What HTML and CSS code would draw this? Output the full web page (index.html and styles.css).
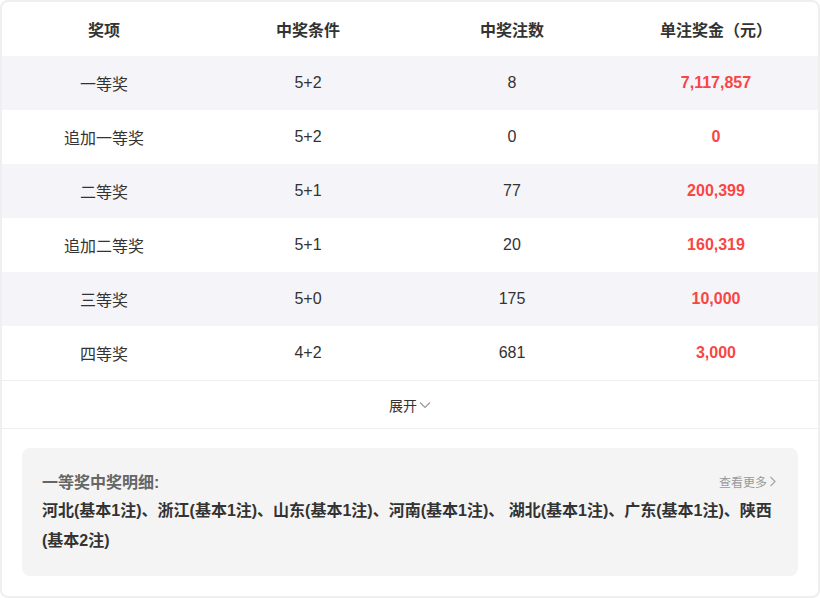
FILE: index.html
```html
<!DOCTYPE html>
<html lang="zh">
<head>
<meta charset="utf-8">
<link rel="stylesheet" href="styles.css">
</head>
<body>
<div class="card">
  <div class="row head">
    <div class="cell">奖项</div>
    <div class="cell">中奖条件</div>
    <div class="cell">中奖注数</div>
    <div class="cell">单注奖金（元）</div>
  </div>
  <div class="row alt">
    <div class="cell">一等奖</div>
    <div class="cell">5+2</div>
    <div class="cell">8</div>
    <div class="cell money">7,117,857</div>
  </div>
  <div class="row">
    <div class="cell">追加一等奖</div>
    <div class="cell">5+2</div>
    <div class="cell">0</div>
    <div class="cell money">0</div>
  </div>
  <div class="row alt">
    <div class="cell">二等奖</div>
    <div class="cell">5+1</div>
    <div class="cell">77</div>
    <div class="cell money">200,399</div>
  </div>
  <div class="row">
    <div class="cell">追加二等奖</div>
    <div class="cell">5+1</div>
    <div class="cell">20</div>
    <div class="cell money">160,319</div>
  </div>
  <div class="row alt">
    <div class="cell">三等奖</div>
    <div class="cell">5+0</div>
    <div class="cell">175</div>
    <div class="cell money">10,000</div>
  </div>
  <div class="row">
    <div class="cell">四等奖</div>
    <div class="cell">4+2</div>
    <div class="cell">681</div>
    <div class="cell money">3,000</div>
  </div>
  <div class="expand">展开<svg class="chev-down" width="12" height="8" viewBox="0 0 12 8"><path d="M1 1.5 L6 6.5 L11 1.5" fill="none" stroke="#999" stroke-width="1.2"/></svg></div>
  <div class="detail-wrap">
    <div class="detail">
      <div class="detail-top">
        <span class="detail-title">一等奖中奖明细:</span>
        <span class="more">查看更多<svg width="7" height="11" viewBox="0 0 7 11"><path d="M1.5 1 L6 5.5 L1.5 10" fill="none" stroke="#aaa" stroke-width="1.3"/></svg></span>
      </div>
      <div class="detail-text">河北(基本1注)、浙江(基本1注)、山东(基本1注)、河南(基本1注)、 湖北(基本1注)、广东(基本1注)、陕西(基本2注)</div>
    </div>
  </div>
</div>
</body>
</html>
```
FILE: styles.css
```css
* { box-sizing: border-box; }
html, body { margin: 0; padding: 0; background: #fff; }
body {
  font-family: "Liberation Sans", "Noto Sans CJK SC", sans-serif;
  color: #333;
  width: 820px;
  height: 598px;
}
.card {
  width: 820px;
  height: 598px;
  border: 2px solid #efefef;
  border-radius: 8px;
  overflow: hidden;
  background: #fff;
}
.row {
  display: grid;
  grid-template-columns: repeat(4, 1fr);
  height: 54px;
  align-items: center;
  font-size: 16px;
}
.row.head {
  font-weight: bold;
}
.row.alt { background: #f5f5f9; }
.cell { text-align: center; }
.money { color: #fa4545; font-weight: bold; }
.expand {
  height: 49px;
  border-top: 1px solid #eeeeee;
  border-bottom: 1px solid #eeeeee;
  display: flex;
  align-items: center;
  justify-content: center;
  font-size: 14px;
  color: #333;
  gap: 2px;
}
.chev-down { margin-top: 1px; }
.detail-wrap { padding: 19px 20px 0 20px; }
.detail {
  background: #f4f4f4;
  border-radius: 8px;
  height: 128px;
  padding: 18px 22px 0 20px;
}
.detail-top {
  display: flex;
  justify-content: space-between;
  align-items: center;
  height: 30px;
}
.detail-title {
  font-size: 16px;
  font-weight: bold;
  color: #666;
}
.more {
  font-size: 12px;
  color: #999;
  display: flex;
  align-items: center;
  gap: 2px;
}
.detail-text {
  font-size: 16px;
  font-weight: bold;
  color: #333;
  line-height: 30px;
}
```
